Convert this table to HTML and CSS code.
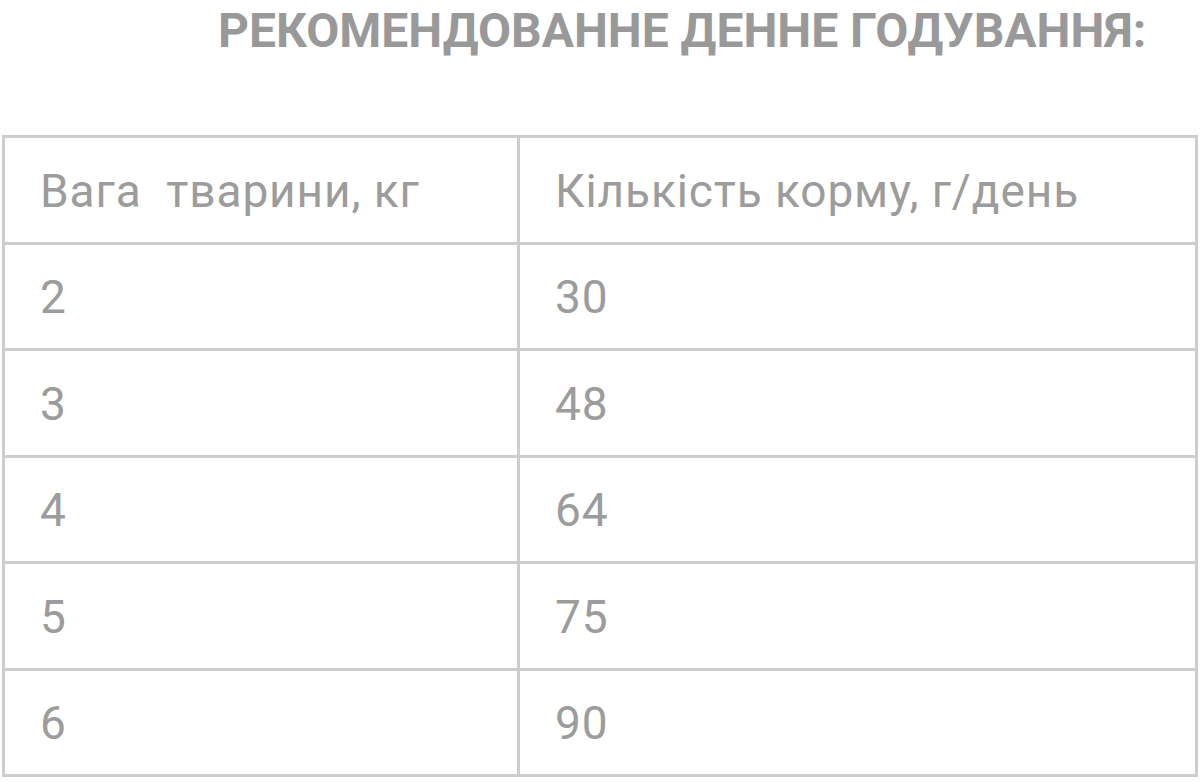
FILE: index.html
```html
<!DOCTYPE html>
<html lang="uk">
<head>
<meta charset="utf-8">
<link rel="stylesheet" href="styles.css">
</head>
<body>
<h2 class="title">РЕКОМЕНДОВАННЕ ДЕННЕ ГОДУВАННЯ:</h2>
<table class="feed">
  <tr><td class="c1">Вага&nbsp; тварини, кг</td><td>Кількість корму, г/день</td></tr>
  <tr><td class="c1">2</td><td>30</td></tr>
  <tr><td class="c1">3</td><td>48</td></tr>
  <tr><td class="c1">4</td><td>64</td></tr>
  <tr><td class="c1">5</td><td>75</td></tr>
  <tr><td class="c1">6</td><td>90</td></tr>
</table>
</body>
</html>
```
FILE: styles.css
```css
html, body {
  margin: 0;
  padding: 0;
  background: #fff;
}
body {
  font-family: Roboto, "Noto Sans", sans-serif;
  color: #9a9a9a;
}
.title {
  margin: 0;
  padding: 2px 0 0 218px;
  height: 135px;
  box-sizing: border-box;
  font-size: 48px;
  font-weight: 700;
  line-height: 58px;
  color: #999;
}
.feed {
  margin-left: 2px;
  width: 1196px;
  border-collapse: collapse;
  border: 3px solid #cdcdcd;
}
.feed td {
  border: 3px solid #cdcdcd;
  height: 106.5px;
  padding: 2px 0 0 35px;
  box-sizing: border-box;
  font-size: 46px;
  font-weight: 400;
  letter-spacing: 0.9px;
  color: #9c9c9c;
  vertical-align: middle;
}
.feed td.c1 {
  width: 515px;
}
```
